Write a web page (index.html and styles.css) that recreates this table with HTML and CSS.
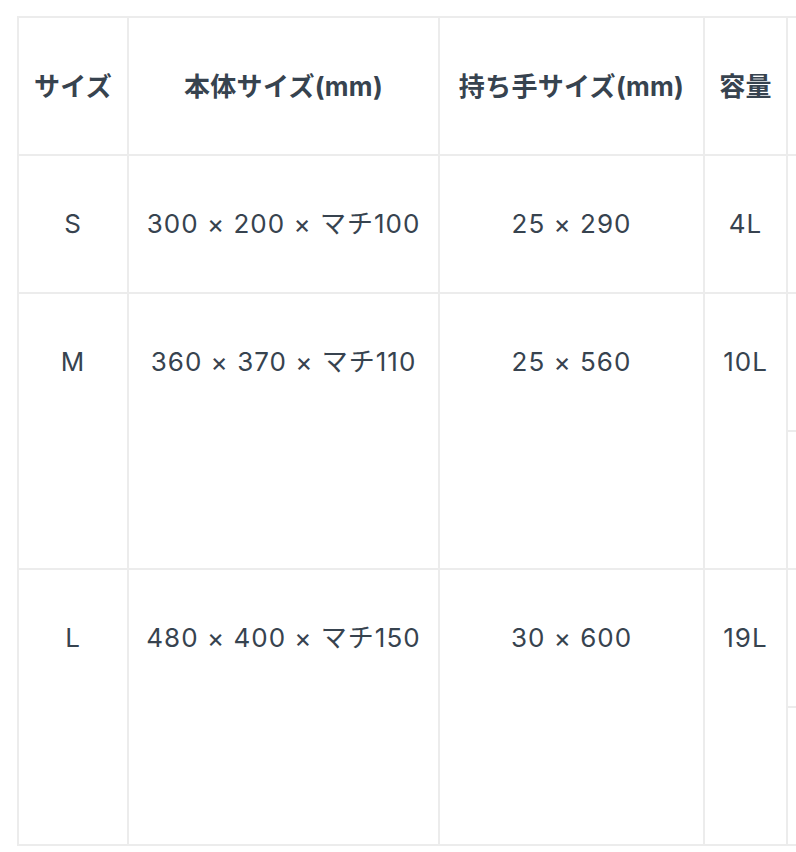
FILE: index.html
```html
<!DOCTYPE html>
<html lang="ja">
<head>
<meta charset="utf-8">
<link rel="stylesheet" href="styles.css">
</head>
<body>
<div class="wrap">
<table class="spec">
  <colgroup>
    <col class="c1"><col class="c2"><col class="c3"><col class="c4"><col class="c5">
  </colgroup>
  <thead>
    <tr>
      <th>サイズ</th>
      <th>本体サイズ(mm)</th>
      <th>持ち手サイズ(mm)</th>
      <th>容量</th>
      <th></th>
    </tr>
  </thead>
  <tbody>
    <tr>
      <td>S</td>
      <td>300 × 200 × マチ100</td>
      <td>25 × 290</td>
      <td>4L</td>
      <td></td>
    </tr>
    <tr>
      <td rowspan="2">M</td>
      <td rowspan="2">360 × 370 × マチ110</td>
      <td rowspan="2">25 × 560</td>
      <td rowspan="2">10L</td>
      <td></td>
    </tr>
    <tr><td></td></tr>
    <tr>
      <td rowspan="2">L</td>
      <td rowspan="2">480 × 400 × マチ150</td>
      <td rowspan="2">30 × 600</td>
      <td rowspan="2">19L</td>
      <td></td>
    </tr>
    <tr><td></td></tr>
  </tbody>
</table>
</div>
</body>
</html>
```
FILE: styles.css
```css
html, body {
  margin: 0;
  padding: 0;
  background: #ffffff;
}
.wrap {
  width: 796px;
  height: 852px;
  overflow: hidden;
  box-sizing: border-box;
  padding: 16px 0 0 17px;
}
.spec {
  border-collapse: collapse;
  table-layout: fixed;
  width: 979px;
  font-family: Inter, "Noto Sans CJK JP", "Noto Sans", sans-serif;
  color: #37434f;
  font-size: 26px;
}
.c1 { width: 110px; }
.c2 { width: 311px; }
.c3 { width: 265px; }
.c4 { width: 83px; }
.c5 { width: 210px; }
.spec th, .spec td {
  border: 2px solid #ececec;
  height: 138px;
  box-sizing: border-box;
  padding: 0;
  text-align: center;
  white-space: nowrap;
  line-height: 36px;
}
.spec th {
  font-weight: 700;
  vertical-align: middle;
  letter-spacing: 0.3px;
  padding-top: 2px;
}
.spec td {
  font-weight: 400;
  vertical-align: top;
  padding-top: 50px;
  letter-spacing: 1px;
}
```
